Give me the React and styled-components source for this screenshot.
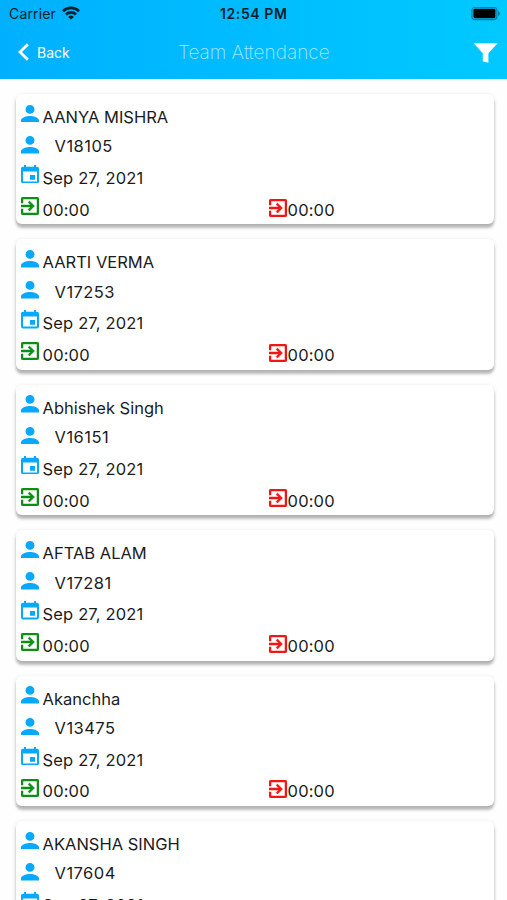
import styled, { createGlobalStyle } from "styled-components";

const members = [
  { name: "AANYA MISHRA", code: "V18105" },
  { name: "AARTI VERMA", code: "V17253" },
  { name: "Abhishek Singh", code: "V16151" },
  { name: "AFTAB ALAM", code: "V17281" },
  { name: "Akanchha", code: "V13475" },
  { name: "AKANSHA SINGH", code: "V17604" },
];

const PersonIcon = () => (
  <Icon viewBox="4 4 16 16" $w={18} $h={17.6} $color="#06a9fd" preserveAspectRatio="none">
    <path d="M12 12c2.21 0 4-1.79 4-4s-1.79-4-4-4-4 1.79-4 4 1.79 4 4 4zm0 2c-2.67 0-8 1.34-8 4v2h16v-2c0-2.66-5.33-4-8-4z" />
  </Icon>
);

const EventIcon = () => (
  <Icon viewBox="3 1 18 20" $w={18} $h={18.4} $color="#06a9fd" preserveAspectRatio="none">
    <path d="M17 12h-5v5h5v-5zM16 1v2H8V1H6v2H5c-1.11 0-1.99.9-1.99 2L3 19c0 1.1.89 2 2 2h14c1.1 0 2-.9 2-2V5c0-1.1-.9-2-2-2h-1V1h-2zm3 18H5V8h14v11z" />
  </Icon>
);

const ClockIcon = ({ color }) => (
  <Icon viewBox="3 3 18 18" $w={18} $h={18} $color={color} $bold>
    <path d="M10.09 15.59L11.5 17l5-5-5-5-1.41 1.41L12.67 11H3v2h9.67l-2.58 2.59zM19 3H5c-1.11 0-2 .9-2 2v4h2V5h14v14H5v-4H3v4c0 1.1.89 2 2 2h14c1.1 0 2-.9 2-2V5c0-1.1-.9-2-2-2z" />
  </Icon>
);

const MemberCard = ({ member }) => (
  <Card>
    <Row $height={31.5}>
      <PersonIcon />
      <Text $drop={3.4}>{member.name}</Text>
    </Row>
    <Row $height={29}>
      <PersonIcon />
      <Text $drop={1.3} $indent={12} $track={0.45}>{member.code}</Text>
    </Row>
    <Row $height={32}>
      <EventIcon />
      <Text $drop={4} $track={0.15}>Sep 27, 2021</Text>
    </Row>
    <Row>
      <Half>
        <ClockIcon color="#0c8f14" />
        <Text $drop={3.8} $track={0.15}>00:00</Text>
      </Half>
      <Half $out>
        <ClockIcon color="#f51414" />
        <Text $drop={2.3} $track={0.15}>00:00</Text>
      </Half>
    </Row>
  </Card>
);

const App = () => {
  return (
    <Screen>
      <GlobalStyle />
      <Header>
        <StatusBar>
          <Carrier>
            Carrier
            <svg width="18" height="14" viewBox="0 0 18 14" fill="none" stroke="#04202c" strokeWidth="2.7">
              <path d="M1 5.2a11.3 11.3 0 0 1 16 0" />
              <path d="M4 8.5a7.1 7.1 0 0 1 10 0" />
              <path d="M9 13.6L6.1 10.9a4.1 4.1 0 0 1 5.8 0z" fill="#04202c" stroke="none" />
            </svg>
          </Carrier>
          <Time>12:54 PM</Time>
          <Battery width="30" height="14" viewBox="0 0 30 14">
            <rect x="0.9" y="0.4" width="25" height="12.2" rx="3" fill="none" stroke="#087ca0" strokeWidth="1.2" />
            <rect x="2.4" y="1.8" width="22" height="9.4" rx="1.4" fill="#000" />
            <path d="M27 4.1c2.6.8 2.6 4 0 4.8z" fill="#087ca0" />
          </Battery>
        </StatusBar>
        <NavBar>
          <Back>
            <svg width="11" height="18" viewBox="0 0 11 18" fill="none" stroke="#fff" strokeWidth="2.8">
              <path d="M9.8 1.2L2 9l7.8 7.8" />
            </svg>
            Back
          </Back>
          <Title>Team Attendance</Title>
          <Filter width="25" height="20" viewBox="0 0 25 20">
            <path d="M0.5 0.2h24.2L15.4 10.3V19.8L9.8 18.6V10.3z" fill="#fff" />
          </Filter>
        </NavBar>
      </Header>
      <List>
        {members.map((member) => (
          <MemberCard key={member.code} member={member} />
        ))}
      </List>
    </Screen>
  );
};

export default App;

const GlobalStyle = createGlobalStyle`
  * {
    box-sizing: border-box;
  }
  body {
    margin: 0;
    background: #fff;
    font-family: Inter, "Liberation Sans", sans-serif;
  }
`;

const Screen = styled.div`
  width: 100%;
  height: 900px;
  overflow: hidden;
  background: #fefefe;
`;

const Header = styled.header`
  height: 79px;
  background: linear-gradient(90deg, #00b0ff, #00c9ff);
`;

const StatusBar = styled.div`
  display: grid;
  grid-template-columns: 211px auto 1fr;
  align-items: center;
  height: 27px;
  padding: 0 6px 0 9px;
  color: #04202c;
`;

const Carrier = styled.div`
  display: flex;
  align-items: center;
  gap: 6px;
  font-size: 14px;
  letter-spacing: 0.15px;
  svg {
    margin-top: -2px;
  }
`;

const Time = styled.div`
  font-size: 14px;
  font-weight: 600;
  letter-spacing: 0.6px;
`;

const Battery = styled.svg`
  justify-self: end;
`;

const NavBar = styled.div`
  display: grid;
  grid-template-columns: 160px auto 1fr;
  align-items: center;
  height: 51px;
  padding: 0 9.5px 0 18px;
  color: #fff;
`;

const Back = styled.div`
  display: flex;
  align-items: center;
  gap: 8px;
  font-size: 14px;
  margin-top: -1px;
`;

const Title = styled.div`
  font-size: 19px;
  font-weight: 200;
  color: #a5e8ff;
`;

const Filter = styled.svg`
  justify-self: end;
  margin-top: 1px;
`;

const List = styled.div`
  display: flex;
  flex-direction: column;
  gap: 15px;
  padding: 15px 13.5px 0 15.6px;
`;

const Card = styled.div`
  flex: none;
  height: 130.4px;
  padding: 10.6px 5.8px 0;
  border-radius: 6px;
  background: #fff;
  box-shadow: 0 4px 3px rgba(0, 0, 0, 0.25), 0 1px 4px rgba(0, 0, 0, 0.12);
`;

const Row = styled.div`
  display: flex;
  align-items: flex-start;
  height: ${(props) => props.$height || 24}px;
`;

const Icon = styled.svg`
  flex: none;
  width: ${(props) => props.$w}px;
  height: ${(props) => props.$h}px;
  margin-right: 3.2px;
  fill: ${(props) => props.$color};
  stroke: ${(props) => (props.$bold ? props.$color : "none")};
  stroke-width: 0.5;
`;

const Half = styled.div`
  display: flex;
  flex: none;
  align-items: flex-start;
  width: ${(props) => (props.$out ? "auto" : "248px")};
  margin-top: ${(props) => (props.$out ? 1.5 : 0)}px;
  ${Icon} {
    margin-right: ${(props) => (props.$out ? 0.2 : 3.2)}px;
  }
`;

const Text = styled.span`
  margin-top: ${(props) => props.$drop}px;
  margin-left: ${(props) => props.$indent || 0}px;
  font-size: 16.5px;
  line-height: 18px;
  letter-spacing: ${(props) => props.$track || 0}px;
  color: #1b1b1b;
  white-space: nowrap;
`;
